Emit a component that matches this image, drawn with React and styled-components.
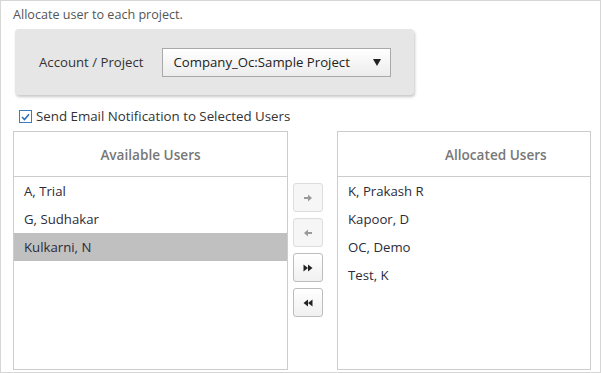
import React from 'react';
import styled, { createGlobalStyle } from 'styled-components';

const GlobalStyle = createGlobalStyle`
  html, body {
    margin: 0;
    padding: 0;
    background: #ffffff;
  }
  body {
    font-family: 'Open Sans', 'Noto Sans', sans-serif;
    color: #333333;
  }
`;

const Frame = styled.div`
  box-sizing: border-box;
  width: 601px;
  height: 373px;
  border: 1px solid #d6d6d6;
  padding: 0 8px 0 12px;
  display: flex;
  flex-direction: column;
`;

const Intro = styled.div`
  font-size: 12.6px;
  color: #555555;
  margin-top: 6px;
  line-height: 16px;
`;

const ProjectPanel = styled.div`
  box-sizing: border-box;
  width: 399px;
  height: 66px;
  margin: 6px 0 0 2px;
  background: #e6e6e6;
  border-radius: 4px;
  box-shadow: 1px 2px 3px rgba(0, 0, 0, 0.22);
  display: flex;
  align-items: center;
  padding-left: 24px;
`;

const Label = styled.span`
  font-size: 13.2px;
  color: #333;
  margin-right: 19px;
`;

const Select = styled.div`
  box-sizing: border-box;
  width: 229px;
  height: 29px;
  border: 1px solid #a9a9a9;
  background: linear-gradient(#ffffff, #ececec);
  display: flex;
  align-items: center;
  justify-content: space-between;
  padding: 0 9px 0 10px;
  font-size: 13.2px;
  color: #222;
`;

const Caret = styled.span`
  width: 0;
  height: 0;
  border-left: 4px solid transparent;
  border-right: 4px solid transparent;
  border-top: 7px solid #222;
`;

const CheckRow = styled.label`
  display: flex;
  align-items: center;
  margin: 13px 0 0 6px;
  font-size: 13.3px;
  color: #333;
  line-height: 17px;
`;

const Box = styled.span`
  box-sizing: border-box;
  width: 13px;
  height: 13px;
  border: 1px solid #3b7bbf;
  background: #fff;
  margin-right: 4px;
  display: flex;
  align-items: center;
  justify-content: center;
`;

const Lists = styled.div`
  display: flex;
  margin-top: 6px;
  height: 239px;
`;

const ListBox = styled.div`
  box-sizing: border-box;
  flex: 0 0 ${p => p.$w}px;
  height: 100%;
  border: 1px solid #cccccc;
  background: #fff;
`;

const ListHead = styled.div`
  box-sizing: border-box;
  height: 45px;
  border-bottom: 1px solid #cccccc;
  display: flex;
  align-items: center;
  justify-content: ${p => (p.$left ? 'flex-start' : 'center')};
  padding-left: ${p => p.$left || 0}px;
  font-size: 13.6px;
  font-weight: 600;
  color: #777777;
`;

const Item = styled.div`
  height: 28px;
  line-height: 28px;
  padding-left: 10px;
  font-size: 13.2px;
  color: #2b2b3a;
  background: ${p => (p.$selected ? '#c0c0c0' : 'transparent')};
`;

const Buttons = styled.div`
  flex: 0 0 30px;
  display: flex;
  flex-direction: column;
  gap: 6px;
  padding-top: 52px;
  margin: 0 14px 0 5px;
`;

const MoveButton = styled.button`
  box-sizing: border-box;
  width: 30px;
  height: 29px;
  padding: 0;
  border: 1px solid ${p => (p.disabled ? '#dddddd' : '#bdbdbd')};
  border-radius: 3px;
  background: ${p => (p.disabled ? '#f6f6f6' : 'linear-gradient(#ffffff, #f0f0f0)')};
  display: flex;
  align-items: center;
  justify-content: center;
`;

const Arrow = ({ dir }) => (
  <svg width="10" height="8" viewBox="0 0 10 8">
    <g transform={dir === 'left' ? 'translate(10 0) scale(-1 1)' : undefined} fill="#9a9a9a">
      <rect x="1" y="3" width="5" height="2" />
      <path d="M5 0.5 L9 4 L5 7.5 Z" />
    </g>
  </svg>
);

const Double = ({ dir }) => (
  <svg width="10" height="8" viewBox="0 0 10 8">
    <g transform={dir === 'left' ? 'translate(10 0) scale(-1 1)' : undefined} fill="#222">
      <path d="M0.5 0.5 L5 4 L0.5 7.5 Z" />
      <path d="M5 0.5 L9.5 4 L5 7.5 Z" />
    </g>
  </svg>
);

const available = ['A, Trial', 'G, Sudhakar', 'Kulkarni, N'];
const allocated = ['K, Prakash R', 'Kapoor, D', 'OC, Demo', 'Test, K'];

const App = () => (
  <>
    <GlobalStyle />
    <Frame>
      <Intro>Allocate user to each project.</Intro>
      <ProjectPanel>
        <Label>Account / Project</Label>
        <Select>
          <span>Company_Oc:Sample Project</span>
          <Caret />
        </Select>
      </ProjectPanel>
      <CheckRow>
        <Box>
          <svg width="9" height="8" viewBox="0 0 9 8">
            <path d="M1 4 L3.5 6.5 L8 1.2" stroke="#2f6fb3" strokeWidth="1.6" fill="none" />
          </svg>
        </Box>
        Send Email Notification to Selected Users
      </CheckRow>
      <Lists>
        <ListBox $w={275}>
          <ListHead>Available Users</ListHead>
          {available.map(name => (
            <Item key={name} $selected={name === 'Kulkarni, N'}>{name}</Item>
          ))}
        </ListBox>
        <Buttons>
          <MoveButton disabled><Arrow dir="right" /></MoveButton>
          <MoveButton disabled><Arrow dir="left" /></MoveButton>
          <MoveButton><Double dir="right" /></MoveButton>
          <MoveButton><Double dir="left" /></MoveButton>
        </Buttons>
        <ListBox $w={254}>
          <ListHead $left={107}>Allocated Users</ListHead>
          {allocated.map(name => (
            <Item key={name}>{name}</Item>
          ))}
        </ListBox>
      </Lists>
    </Frame>
  </>
);

export default App;
